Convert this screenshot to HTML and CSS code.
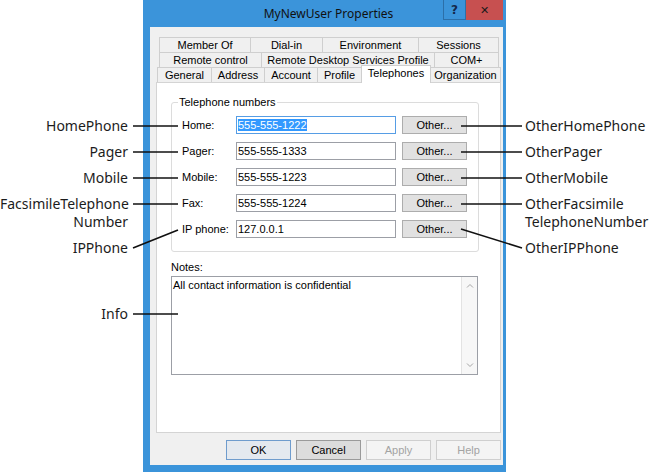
FILE: index.html
```html
<!DOCTYPE html>
<html>
<head>
<meta charset="utf-8">
<link rel="stylesheet" href="styles.css">
</head>
<body>
<div class="page">
  <div class="ann-col ann-left">
    <div>HomePhone</div>
    <div>Pager</div>
    <div>Mobile</div>
    <div>FacsimileTelephone<br>Number</div>
    <div>IPPhone</div>
    <div class="ann-info">Info</div>
  </div>

  <div class="window">
    <div class="titlebar">
      <span class="title">MyNewUser Properties</span>
      <div class="caption">
        <div class="cap cap-help">?</div>
        <div class="cap cap-close">✕</div>
      </div>
    </div>
    <div class="client">
      <div class="tabs">
        <div class="tabrow r1">
          <div class="tab" style="width:91px">Member Of</div>
          <div class="tab" style="width:72px">Dial-in</div>
          <div class="tab" style="width:96px">Environment</div>
          <div class="tab" style="width:81px">Sessions</div>
        </div>
        <div class="tabrow r2">
          <div class="tab" style="width:102px">Remote control</div>
          <div class="tab" style="width:173px">Remote Desktop Services Profile</div>
          <div class="tab" style="width:65px">COM+</div>
        </div>
        <div class="tabrow r3">
          <div class="tab" style="width:54px">General</div>
          <div class="tab" style="width:53px">Address</div>
          <div class="tab" style="width:53px">Account</div>
          <div class="tab" style="width:44px">Profile</div>
          <div class="tab sel" style="width:70px">Telephones</div>
          <div class="tab" style="width:70px">Organization</div>
        </div>
      </div>
      <div class="panel">
        <fieldset class="group">
          <legend>Telephone numbers</legend>
          <div class="rows">
            <div class="row">
              <span class="lbl">Home:</span>
              <div class="field focus"><span class="selected">555-555-1222</span></div>
              <div class="btn">Other...</div>
            </div>
            <div class="row">
              <span class="lbl">Pager:</span>
              <div class="field">555-555-1333</div>
              <div class="btn">Other...</div>
            </div>
            <div class="row">
              <span class="lbl">Mobile:</span>
              <div class="field">555-555-1223</div>
              <div class="btn">Other...</div>
            </div>
            <div class="row">
              <span class="lbl">Fax:</span>
              <div class="field">555-555-1224</div>
              <div class="btn">Other...</div>
            </div>
            <div class="row">
              <span class="lbl">IP phone:</span>
              <div class="field">127.0.0.1</div>
              <div class="btn">Other...</div>
            </div>
          </div>
        </fieldset>
        <div class="notes-label">Notes:</div>
        <div class="notes">
          <div class="notes-text">All contact information is confidential</div>
          <div class="vscroll">
            <svg width="16" height="16" viewBox="0 0 16 16"><path d="M5 9.5 L8 6.5 L11 9.5" fill="none" stroke="#a6a6a6" stroke-width="1"/></svg>
            <svg width="16" height="16" viewBox="0 0 16 16"><path d="M5 6.5 L8 9.5 L11 6.5" fill="none" stroke="#a6a6a6" stroke-width="1"/></svg>
          </div>
        </div>
      </div>
      <div class="actions">
        <div class="dbtn ok">OK</div>
        <div class="dbtn cancel">Cancel</div>
        <div class="dbtn disabled">Apply</div>
        <div class="dbtn disabled">Help</div>
      </div>
    </div>
  </div>

  <div class="ann-col ann-right">
    <div>OtherHomePhone</div>
    <div>OtherPager</div>
    <div>OtherMobile</div>
    <div>OtherFacsimile<br>TelephoneNumber</div>
    <div>OtherIPPhone</div>
  </div>

  <svg class="callouts" width="650" height="473" viewBox="0 0 650 473">
    <g stroke="#111" stroke-width="1.6" fill="none">
      <line x1="133" y1="126" x2="178" y2="126"/>
      <line x1="133" y1="152" x2="178" y2="152"/>
      <line x1="133" y1="178" x2="178" y2="178"/>
      <line x1="133" y1="204" x2="178" y2="204"/>
      <line x1="133" y1="248" x2="178" y2="230"/>
      <line x1="133" y1="314" x2="178" y2="314"/>
      <line x1="461" y1="126" x2="522" y2="126"/>
      <line x1="461" y1="152" x2="522" y2="152"/>
      <line x1="461" y1="178" x2="522" y2="178"/>
      <line x1="461" y1="204" x2="522" y2="204"/>
      <line x1="461" y1="229" x2="522" y2="248"/>
    </g>
  </svg>
</div>
</body>
</html>
```

FILE: styles.css
```css
* { box-sizing: border-box; }

body {
  margin: 0;
  background: #fff;
  font-family: "Liberation Sans", Arial, sans-serif;
  font-size: 11px;
  color: #000;
}

.page {
  position: relative;
  width: 650px;
  height: 473px;
  display: flex;
  align-items: flex-start;
  overflow: hidden;
}

/* annotation columns */
.ann-col {
  display: flex;
  flex-direction: column;
  gap: 8px;
  padding-top: 117px;
  font-family: "Noto Sans", "Open Sans", sans-serif;
  font-size: 14px;
  line-height: 18px;
  color: #1c1c1c;
  white-space: nowrap;
}
.ann-left {
  width: 143px;
  flex: none;
  text-align: right;
  padding-right: 15px;
}
.ann-right {
  width: 144px;
  flex: none;
  padding-left: 19px;
}
.ann-info { margin-top: 40px; }

/* window */
.window {
  flex: none;
  width: 363px;
  height: 472px;
  background: #3b94da;
  padding: 0 3px 7px 7px;
  display: flex;
  flex-direction: column;
}
.titlebar {
  position: relative;
  height: 27px;
  flex: none;
  display: flex;
  align-items: center;
  justify-content: center;
  padding-left: 4px;
}
.title {
  font-family: "Noto Sans", "Open Sans", sans-serif;
  font-size: 12px;
  color: #111;
}
.caption {
  position: absolute;
  top: 0;
  right: 0;
  display: flex;
}
.cap {
  height: 20px;
  display: flex;
  align-items: center;
  justify-content: center;
  font-family: "DejaVu Sans", sans-serif;
  font-weight: bold;
}
.cap-help {
  width: 23px;
  border: 1px solid #2c6fa8;
  border-top: none;
  color: #14284a;
  font-size: 12px;
}
.cap-close {
  width: 37px;
  background: #c75050;
  color: #1a1a1a;
  font-size: 11px;
}

.client {
  flex: 1;
  background: #f0f0f0;
  padding: 10px 2px 0 6px;
  display: flex;
  flex-direction: column;
}

/* tabs */
.tabs { display: flex; flex-direction: column; }
.tabrow {
  display: flex;
  height: 15px;
  margin-left: 3px;
  width: 340px;
}
.tabrow.r3 { margin-left: 1px; width: 344px; }
.tab {
  flex: none;
  height: 15px;
  border-top: 1px solid #cfcfcf;
  border-left: 1px solid #cfcfcf;
  background: #f0f0f0;
  text-align: center;
  line-height: 14px;
  white-space: nowrap;
}
.tab:last-child { border-right: 1px solid #cfcfcf; }
.tab.sel {
  position: relative;
  z-index: 1;
  height: 18px;
  margin-top: -2px;
  background: #fff;
  border-right: 1px solid #cfcfcf;
  line-height: 15px;
}
.tab.sel + .tab { border-left: none; }

/* panel */
.panel {
  height: 351px;
  background: #fff;
  border: 1px solid #d4d4d4;
  padding: 13px 0 0 14px;
  flex: none;
}
.group {
  width: 308px;
  margin: 0;
  border: 1px solid #dcdcdc;
  border-radius: 3px;
  padding: 7px 0 13px 10px;
}
.group legend {
  margin-left: -4px;
  padding: 0 1px;
  line-height: 13px;
  color: #000;
}
.rows { display: flex; flex-direction: column; gap: 8px; }
.row {
  display: flex;
  align-items: center;
  height: 18px;
}
.lbl { width: 54px; flex: none; }
.field {
  width: 160px;
  height: 18px;
  border: 1px solid #9c9fa6;
  padding: 0 1px;
  line-height: 16px;
  background: #fff;
  margin-right: 6px;
}
.field.focus { border-color: #569de5; }
.selected { background: #3399ff; color: #fff; }
.btn {
  width: 65px;
  height: 18px;
  border: 1px solid #adadad;
  background: #e1e1e1;
  text-align: center;
  line-height: 16px;
}

.notes-label {
  margin-top: 9px;
  line-height: 13px;
}
.notes {
  margin-top: 2px;
  width: 307px;
  height: 99px;
  border: 1px solid #9c9fa6;
  display: flex;
}
.notes-text {
  flex: 1;
  padding: 1px 1px;
  line-height: 14px;
}
.vscroll {
  width: 16px;
  flex: none;
  background: #f7f7f7;
  border-left: 1px solid #e3e3e3;
  display: flex;
  flex-direction: column;
  justify-content: space-between;
  padding: 1px 0;
}
.vscroll svg { display: block; }

/* dialog buttons */
.actions {
  display: flex;
  justify-content: flex-end;
  gap: 5px;
  margin-top: 7px;
}
.dbtn {
  width: 65px;
  height: 20px;
  text-align: center;
  line-height: 18px;
  border: 1px solid #adadad;
  background: #e1e1e1;
}
.dbtn.ok { border-color: #6f9ccd; background: #e4e9ef; }
.dbtn.cancel { border-color: #9a9a9a; background: #dcdcdc; }
.dbtn.disabled { border-color: #cfcfcf; background: #f4f4f4; color: #a3a3a3; }

.callouts {
  position: absolute;
  top: 0;
  left: 0;
  pointer-events: none;
}
```
